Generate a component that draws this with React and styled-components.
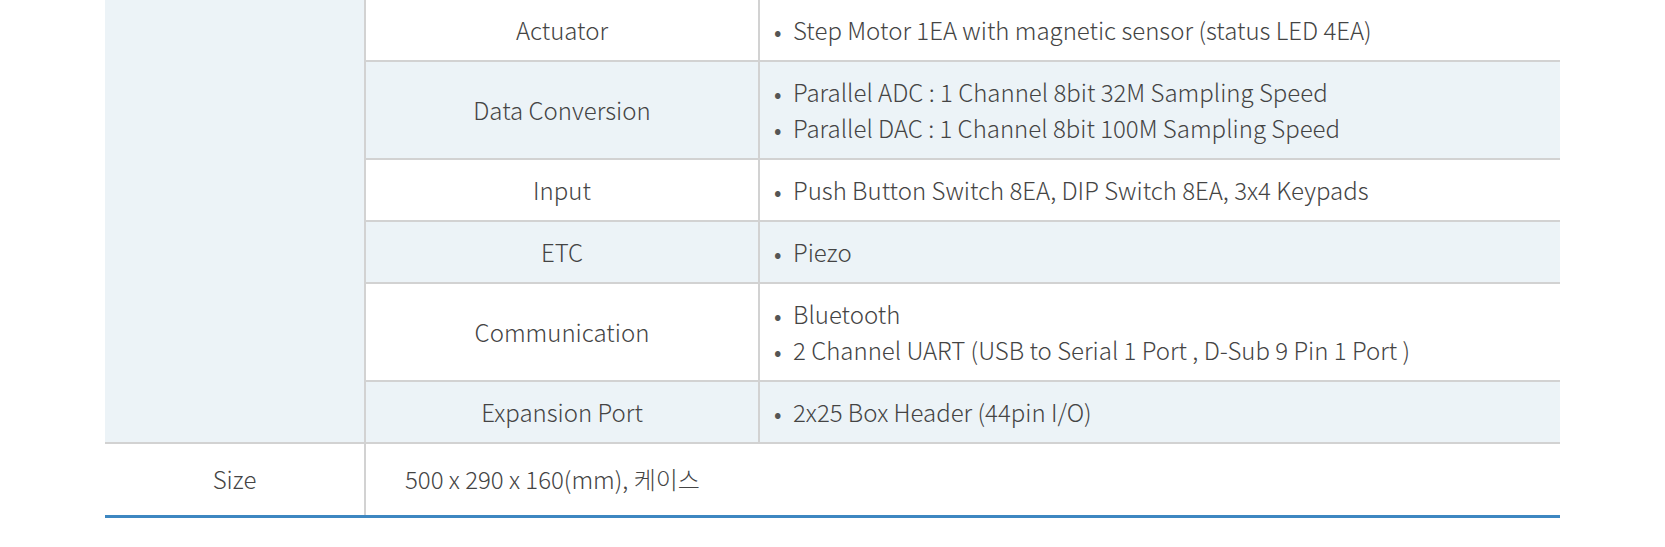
import React from "react";
import styled, { createGlobalStyle } from "styled-components";

const Global = createGlobalStyle`
  html, body { margin: 0; padding: 0; background: #fff; }
  body { font-family: "Noto Sans CJK KR", "Noto Sans", sans-serif; }
`;

const Wrap = styled.div`
  width: 1455px;
  margin: 0 auto;
`;

const Table = styled.table`
  width: 100%;
  border-collapse: collapse;
  table-layout: fixed;
  border-bottom: 3px solid #3d87c1;
  font-family: "Noto Sans CJK KR", "Noto Sans", sans-serif;
  font-weight: 300;
  font-size: 24px;
  line-height: 36px;
  color: #444;
`;

const Category = styled.th`
  background: #ecf3f7;
  border-right: 2px solid #d2d2d2;
  font-weight: 300;
  padding: 0;
`;

const Label = styled.td`
  text-align: center;
  padding: 12px 10px;
  border-right: 2px solid #d2d2d2;
  border-top: ${(p) => (p.$first ? "none" : "2px solid #d2d2d2")};
  background: ${(p) => (p.$shade ? "#ecf3f7" : "#fff")};
`;

const Value = styled.td`
  padding: 12px 14px;
  border-top: ${(p) => (p.$first ? "none" : "2px solid #d2d2d2")};
  background: ${(p) => (p.$shade ? "#ecf3f7" : "#fff")};
`;

const List = styled.ul`
  list-style: none;
  margin: 0;
  padding: 0;
`;

const Item = styled.li`
  display: flex;
  &::before {
    content: "•";
    width: 19px;
    flex: none;
    font-size: 22px;
    font-weight: 400;
    color: #555;
  }
`;

const SizeLabel = styled.td`
  text-align: center;
  padding: 17px 10px 18px;
  border-top: 2px solid #d2d2d2;
  border-right: 2px solid #d2d2d2;
`;

const SizeValue = styled.td`
  padding: 17px 39px 18px;
  border-top: 2px solid #d2d2d2;
`;

const rows = [
  { label: "Actuator", items: ["Step Motor 1EA with magnetic sensor (status LED 4EA)"] },
  {
    label: "Data Conversion",
    items: [
      "Parallel ADC : 1 Channel 8bit 32M Sampling Speed",
      "Parallel DAC : 1 Channel 8bit 100M Sampling Speed",
    ],
  },
  { label: "Input", items: ["Push Button Switch 8EA, DIP Switch 8EA, 3x4 Keypads"] },
  { label: "ETC", items: ["Piezo"] },
  {
    label: "Communication",
    items: ["Bluetooth", "2 Channel UART (USB to Serial 1 Port , D-Sub 9 Pin 1 Port )"],
  },
  { label: "Expansion Port", items: ["2x25 Box Header (44pin I/O)"] },
];

export default function App() {
  return (
    <Wrap>
      <Global />
      <Table>
        <colgroup>
          <col style={{ width: "260px" }} />
          <col style={{ width: "394px" }} />
          <col />
        </colgroup>
        <tbody>
          {rows.map((r, i) => (
            <tr key={r.label}>
              {i === 0 && <Category rowSpan={rows.length} />}
              <Label $first={i === 0} $shade={i % 2 === 1}>
                {r.label}
              </Label>
              <Value $first={i === 0} $shade={i % 2 === 1}>
                <List>
                  {r.items.map((t) => (
                    <Item key={t}>{t}</Item>
                  ))}
                </List>
              </Value>
            </tr>
          ))}
          <tr>
            <SizeLabel>Size</SizeLabel>
            <SizeValue colSpan={2}>500 x 290 x 160(mm), 케이스</SizeValue>
          </tr>
        </tbody>
      </Table>
    </Wrap>
  );
}
